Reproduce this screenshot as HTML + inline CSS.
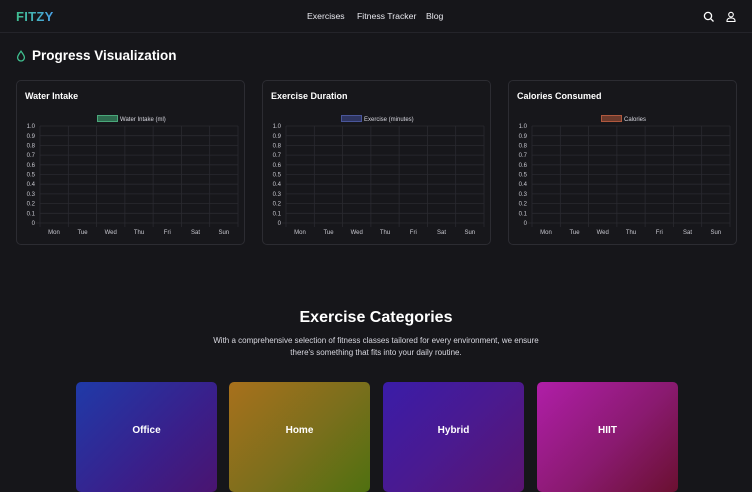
<!DOCTYPE html>
<html><head><meta charset="utf-8"><style>
*{margin:0;padding:0;box-sizing:border-box}
body{width:752px;height:476px;overflow:hidden;background:#16161a;font-family:"Liberation Sans",sans-serif;color:#fff;position:relative}
.nav{height:33px;border-bottom:1px solid #24242a;position:relative}
.logo{position:absolute;left:16px;top:9px;font-size:13px;font-weight:bold;background:linear-gradient(90deg,#3fbf8f,#4aa0e8);-webkit-background-clip:text;color:transparent;letter-spacing:.3px}
.links{position:absolute;top:11px;font-size:8.7px;color:#e8e8ee}
.links span{position:absolute;white-space:nowrap}
h2{position:absolute;left:32px;top:48px;font-size:13.5px;font-weight:bold}
.card{position:absolute;top:80px;width:229px;height:165px;border:1px solid #2c2c32;border-radius:5px;background:#17171b}
.card .t{position:absolute;left:8px;top:10px;font-size:9px;font-weight:bold}
.card svg{position:absolute;left:0;top:0}
h3{position:absolute;left:0;width:752px;top:309px;text-align:center;font-size:16px;font-weight:bold}
p{position:absolute;left:0;width:752px;top:335px;text-align:center;font-size:8px;line-height:12px;color:#d8d8e0}
.cat{position:absolute;top:382px;width:141px;height:110px;border-radius:5px;display:flex;align-items:center;justify-content:center;font-size:10px;font-weight:bold;padding-bottom:14px}
</style></head><body>
<div class="nav">
<div class="logo">FITZY</div>
<div class="links"><span style="left:307px">Exercises</span><span style="left:357px">Fitness Tracker</span><span style="left:426px">Blog</span></div>
<svg style="position:absolute;left:703px;top:11px" width="12" height="12" viewBox="0 0 12 12"><circle cx="5" cy="5" r="3.6" fill="none" stroke="#fff" stroke-width="1.3"/><line x1="7.7" y1="7.7" x2="10.5" y2="10.5" stroke="#fff" stroke-width="1.3"/></svg>
<svg style="position:absolute;left:725px;top:11px" width="12" height="12" viewBox="0 0 12 12"><circle cx="6" cy="3.6" r="2.3" fill="none" stroke="#fff" stroke-width="1.1"/><path d="M2 10.5v-0.6c0-1.8 1.5-3 4-3s4 1.2 4 3v0.6z" fill="none" stroke="#fff" stroke-width="1.1"/></svg>
</div>
<svg style="position:absolute;left:16px;top:50px" width="10" height="12" viewBox="0 0 10 12"><path d="M5 1.2C3.5 3.5 1.6 5.5 1.6 7.6a3.4 3.4 0 0 0 6.8 0C8.4 5.5 6.5 3.5 5 1.2z" fill="none" stroke="#3fbf8f" stroke-width="1.3"/></svg>
<h2>Progress Visualization</h2>

<div class="card" style="left:16px"><div class="t">Water Intake</div>
<svg width="229" height="165"><g id="g" stroke="#2a2a30" stroke-width="0.8">
<line x1="23" y1="45" x2="221" y2="45"/><line x1="23" y1="54.7" x2="221" y2="54.7"/><line x1="23" y1="64.4" x2="221" y2="64.4"/><line x1="23" y1="74.1" x2="221" y2="74.1"/><line x1="23" y1="83.8" x2="221" y2="83.8"/><line x1="23" y1="93.5" x2="221" y2="93.5"/><line x1="23" y1="103.2" x2="221" y2="103.2"/><line x1="23" y1="112.9" x2="221" y2="112.9"/><line x1="23" y1="122.6" x2="221" y2="122.6"/><line x1="23" y1="132.3" x2="221" y2="132.3"/><line x1="19" y1="142" x2="221" y2="142"/>
<line x1="23" y1="45" x2="23" y2="146"/><line x1="51.3" y1="45" x2="51.3" y2="146"/><line x1="79.6" y1="45" x2="79.6" y2="146"/><line x1="107.9" y1="45" x2="107.9" y2="146"/><line x1="136.1" y1="45" x2="136.1" y2="146"/><line x1="164.4" y1="45" x2="164.4" y2="146"/><line x1="192.7" y1="45" x2="192.7" y2="146"/><line x1="221" y1="45" x2="221" y2="146"/></g>
<g fill="#c8c8d0" font-size="6" font-family="Liberation Sans" text-anchor="end"><text x="18" y="47">1.0</text><text x="18" y="57">0.9</text><text x="18" y="66.5">0.8</text><text x="18" y="76">0.7</text><text x="18" y="86">0.6</text><text x="18" y="95.5">0.5</text><text x="18" y="105">0.4</text><text x="18" y="115">0.3</text><text x="18" y="124.5">0.2</text><text x="18" y="134.5">0.1</text><text x="18" y="144">0</text></g>
<g fill="#c8c8d0" font-size="6" font-family="Liberation Sans" text-anchor="middle"><text x="37" y="153">Mon</text><text x="65.5" y="153">Tue</text><text x="93.7" y="153">Wed</text><text x="122" y="153">Thu</text><text x="150.3" y="153">Fri</text><text x="178.5" y="153">Sat</text><text x="206.8" y="153">Sun</text></g>
<rect x="80.5" y="34.5" width="20" height="6" fill="#2e6b4f" stroke="#4aa77a"/><text x="103" y="40" fill="#d8d8e0" font-size="6" font-family="Liberation Sans">Water Intake (ml)</text></svg></div>

<div class="card" style="left:262px"><div class="t">Exercise Duration</div>
<svg width="229" height="165"><use href="#g"/>
<g fill="#c8c8d0" font-size="6" font-family="Liberation Sans" text-anchor="end"><text x="18" y="47">1.0</text><text x="18" y="57">0.9</text><text x="18" y="66.5">0.8</text><text x="18" y="76">0.7</text><text x="18" y="86">0.6</text><text x="18" y="95.5">0.5</text><text x="18" y="105">0.4</text><text x="18" y="115">0.3</text><text x="18" y="124.5">0.2</text><text x="18" y="134.5">0.1</text><text x="18" y="144">0</text></g>
<g fill="#c8c8d0" font-size="6" font-family="Liberation Sans" text-anchor="middle"><text x="37" y="153">Mon</text><text x="65.5" y="153">Tue</text><text x="93.7" y="153">Wed</text><text x="122" y="153">Thu</text><text x="150.3" y="153">Fri</text><text x="178.5" y="153">Sat</text><text x="206.8" y="153">Sun</text></g>
<rect x="78.5" y="34.5" width="20" height="6" fill="#2e3560" stroke="#4a569a"/><text x="101" y="40" fill="#d8d8e0" font-size="6" font-family="Liberation Sans">Exercise (minutes)</text></svg></div>

<div class="card" style="left:508px"><div class="t">Calories Consumed</div>
<svg width="229" height="165"><use href="#g"/>
<g fill="#c8c8d0" font-size="6" font-family="Liberation Sans" text-anchor="end"><text x="18" y="47">1.0</text><text x="18" y="57">0.9</text><text x="18" y="66.5">0.8</text><text x="18" y="76">0.7</text><text x="18" y="86">0.6</text><text x="18" y="95.5">0.5</text><text x="18" y="105">0.4</text><text x="18" y="115">0.3</text><text x="18" y="124.5">0.2</text><text x="18" y="134.5">0.1</text><text x="18" y="144">0</text></g>
<g fill="#c8c8d0" font-size="6" font-family="Liberation Sans" text-anchor="middle"><text x="37" y="153">Mon</text><text x="65.5" y="153">Tue</text><text x="93.7" y="153">Wed</text><text x="122" y="153">Thu</text><text x="150.3" y="153">Fri</text><text x="178.5" y="153">Sat</text><text x="206.8" y="153">Sun</text></g>
<rect x="92.5" y="34.5" width="20" height="6" fill="#6b3a2c" stroke="#b0583e"/><text x="115" y="40" fill="#d8d8e0" font-size="6" font-family="Liberation Sans">Calories</text></svg></div>

<h3>Exercise Categories</h3>
<p>With a comprehensive selection of fitness classes tailored for every environment, we ensure<br>there's something that fits into your daily routine.</p>
<div class="cat" style="left:76px;background:linear-gradient(135deg,#1f3aa8,#3a1f8a 60%,#4a1470)">Office</div>
<div class="cat" style="left:229px;background:linear-gradient(135deg,#a8701c,#7a6f1c 55%,#4f7010)">Home</div>
<div class="cat" style="left:383px;background:linear-gradient(135deg,#3a1ca8,#4a1a90 50%,#5a1470)">Hybrid</div>
<div class="cat" style="left:537px;background:linear-gradient(135deg,#b01ea8,#8a1a70 55%,#6a1030)">HIIT</div>
</body></html>
